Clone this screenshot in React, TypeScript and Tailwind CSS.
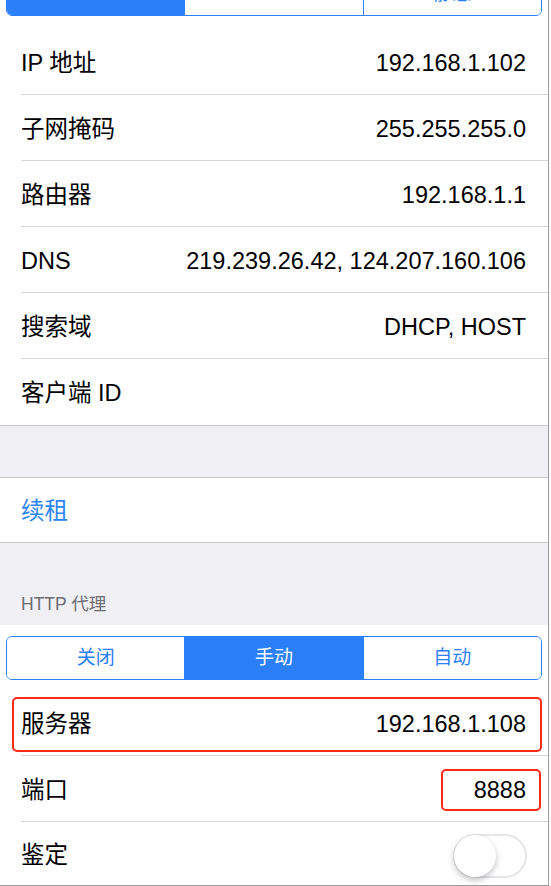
import React from 'react'

const font = { fontFamily: '"Liberation Sans", "Noto Sans CJK SC", sans-serif' }

type Item = { label: string; value?: string }

const dhcpRows: Item[] = [
  { label: 'IP 地址', value: '192.168.1.102' },
  { label: '子网掩码', value: '255.255.255.0' },
  { label: '路由器', value: '192.168.1.1' },
  { label: 'DNS', value: '219.239.26.42, 124.207.160.106' },
  { label: '搜索域', value: 'DHCP, HOST' },
  { label: '客户端 ID' },
]

function Segmented({ items, active, className }: { items: string[]; active: number; className?: string }) {
  return (
    <div className={`flex h-[44px] overflow-hidden rounded-[6px] border-[1.5px] border-[#2b7ff8] ${className ?? ''}`}>
      {items.map((it, i) => (
        <div
          key={it}
          className={`flex flex-1 items-center justify-center text-[19px] ${
            i === active ? 'bg-[#2b7ff8] text-white' : 'bg-white text-[#2b7ff8]'
          } ${i > 0 ? 'border-l-[1.5px] border-[#2b7ff8]' : ''}`}
        >
          {it}
        </div>
      ))}
    </div>
  )
}

function Row({ item, last }: { item: Item; last?: boolean }) {
  return (
    <div className={`pl-[21px] ${last ? 'border-b border-[#c8c7cc]' : ''}`}>
      <div className={`flex h-[66px] items-center justify-between pr-[22px] pt-[4px] ${last ? '' : 'border-b border-[#d6d6da]'}`}>
        <span className="text-[23.5px] text-black">{item.label}</span>
        {item.value && <span className="text-[23.5px] text-black">{item.value}</span>}
      </div>
    </div>
  )
}

export default function App() {
  return (
    <div style={font} className="h-[886px] w-[549px] overflow-hidden border-r border-b border-[#9a9a9a] bg-white">
      {/* top segmented control, mostly scrolled off */}
      <div className="px-[6px]">
        <Segmented items={['DHCP', 'BootP', '静态']} active={0} className="-mt-[28px]" />
      </div>

      <div className="mt-[13px]">
        {dhcpRows.map((r, i) => (
          <Row key={r.label} item={r} last={i === dhcpRows.length - 1} />
        ))}
      </div>

      <div className="h-[52px] border-b border-[#c8c7cc] bg-[#efeff4]" />

      <div className="flex h-[65px] items-center border-b border-[#c8c7cc] pl-[21px] pt-[3px]">
        <span className="text-[23.5px] text-[#2d84f6]">续租</span>
      </div>

      <div className="flex h-[82px] items-end bg-[#efeff4] pb-[8px] pl-[21px]">
        <span className="text-[17.5px] text-[#6d6d72]">HTTP 代理</span>
      </div>

      <div className="px-[6px] pt-[11px]">
        <Segmented items={['关闭', '手动', '自动']} active={1} />
      </div>

      <div className="mt-[10px] pl-[21px]">
        <div className="relative flex h-[66px] items-center justify-between border-b border-[#d6d6da] pr-[22px] pt-[4px]">
          <span className="text-[23.5px] text-black">服务器</span>
          <span className="text-[23.5px] text-black">192.168.1.108</span>
          <div className="absolute left-[-9px] right-[6px] top-[7px] h-[55px] rounded-[5px] border-2 border-[#fa2a16]" />
        </div>
        <div className="relative flex h-[66px] items-center justify-between border-b border-[#d6d6da] pr-[22px] pt-[4px]">
          <span className="text-[23.5px] text-black">端口</span>
          <span className="text-[23.5px] text-black">8888</span>
          <div className="absolute right-[7px] top-[13px] h-[42px] w-[100px] rounded-[5px] border-2 border-[#fa2a16]" />
        </div>
        <div className="flex h-[66px] items-center justify-between pr-[21px] pt-[2px]">
          <span className="text-[23.5px] text-black">鉴定</span>
          <div className="relative h-[44px] w-[74px] rounded-full border-2 border-[#e5e5ea] bg-white">
            <div className="absolute left-[-1px] top-[-1px] h-[42px] w-[42px] rounded-full bg-white shadow-[0_3px_6px_rgba(0,0,0,0.25)]" />
          </div>
        </div>
      </div>
    </div>
  )
}
